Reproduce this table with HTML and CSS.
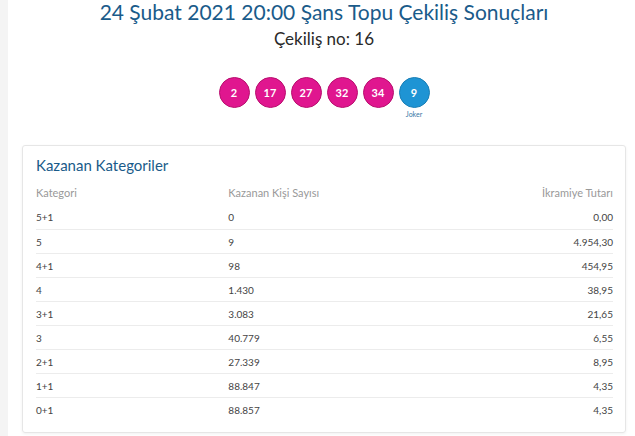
FILE: index.html
```html
<!DOCTYPE html>
<html lang="tr">
<head>
  <meta charset="UTF-8" />
  <meta name="viewport" content="width=device-width, initial-scale=1.0" />
  <title>Şans Topu Çekiliş Sonuçları</title>
  <link rel="stylesheet" href="styles.css">
</head>
<body>
  <main class="page">
    <header class="draw-head">
      <h1>24 Şubat 2021 20:00 Şans Topu Çekiliş Sonuçları</h1>
      <div class="draw-no">Çekiliş no: 16</div>
    </header>

    <div class="balls">
      <div class="ball">2</div>
      <div class="ball">17</div>
      <div class="ball">27</div>
      <div class="ball">32</div>
      <div class="ball">34</div>
      <div class="ball-wrap">
        <div class="ball joker">9</div>
        <span class="joker-label">Joker</span>
      </div>
    </div>

    <section class="card">
      <h2>Kazanan Kategoriler</h2>
      <div class="table">
        <div class="row head"><span>Kategori</span><span>Kazanan Kişi Sayısı</span><span>İkramiye Tutarı</span></div>
        <div class="row"><span>5+1</span><span>0</span><span>0,00</span></div>
        <div class="row"><span>5</span><span>9</span><span>4.954,30</span></div>
        <div class="row"><span>4+1</span><span>98</span><span>454,95</span></div>
        <div class="row"><span>4</span><span>1.430</span><span>38,95</span></div>
        <div class="row"><span>3+1</span><span>3.083</span><span>21,65</span></div>
        <div class="row"><span>3</span><span>40.779</span><span>6,55</span></div>
        <div class="row"><span>2+1</span><span>27.339</span><span>8,95</span></div>
        <div class="row"><span>1+1</span><span>88.847</span><span>4,35</span></div>
        <div class="row"><span>0+1</span><span>88.857</span><span>4,35</span></div>
      </div>
    </section>
  </main>
</body>
</html>
```

FILE: styles.css
```css
body {
  margin: 0;
  background: #f4f4f4;
  font-family: 'Lato', 'Noto Sans', sans-serif;
  color: #333;
}

.page {
  margin-left: 8px;
  background: #fff;
  min-height: 436px;
  padding: 0 9px 0 14px;
  box-sizing: border-box;
}

.draw-head {
  text-align: center;
}

h1 {
  margin: 0;
  font-size: 21px;
  line-height: 24px;
  font-weight: 400;
  color: #1a5b8a;
}

.draw-no {
  margin-top: 4px;
  font-size: 17px;
  line-height: 22px;
  color: #2a2a2a;
}

.balls {
  display: flex;
  justify-content: center;
  align-items: flex-start;
  gap: 5px;
  margin-top: 27px;
  height: 68px;
}

.ball {
  width: 31px;
  height: 31px;
  border-radius: 50%;
  background: #e0168f;
  border: 1px solid #b8106f;
  box-sizing: border-box;
  color: #fff;
  font-weight: 700;
  font-size: 11px;
  display: flex;
  align-items: center;
  justify-content: center;
}

.ball.joker {
  background: #1e94d4;
  border-color: #1a7fb6;
}

.ball-wrap {
  display: flex;
  flex-direction: column;
  align-items: center;
}

.joker-label {
  margin-top: 2px;
  font-size: 7px;
  color: #3a78a6;
}

.card {
  border: 1px solid #e6e6e6;
  border-radius: 3px;
  box-shadow: 0 1px 3px rgba(0,0,0,0.06);
  padding: 10px 12px 11px 13px;
}

h2 {
  margin: 0;
  font-size: 15px;
  line-height: 18px;
  font-weight: 400;
  color: #1a5b8a;
}

.table {
  margin-top: 5px;
}

.row {
  display: grid;
  grid-template-columns: 1fr 1fr 1fr;
  height: 24px;
  align-items: center;
  font-size: 10px;
  color: #444;
  border-top: 1px solid #ececec;
  box-sizing: border-box;
}

.row.head,
.row.head + .row {
  border-top: none;
}

.row.head {
  height: 26px;
  font-size: 11px;
  color: #999;
}

.row span:last-child {
  text-align: right;
}
```
